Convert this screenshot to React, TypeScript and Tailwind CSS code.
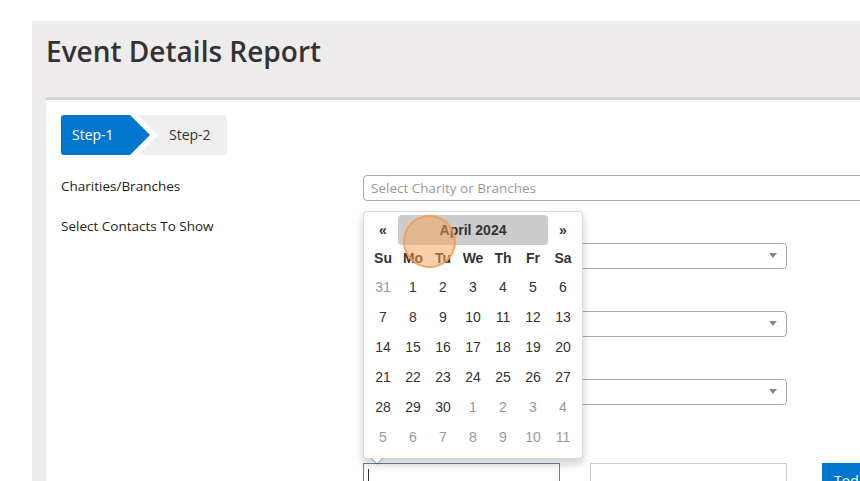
const weeks = [
  [31, 1, 2, 3, 4, 5, 6],
  [7, 8, 9, 10, 11, 12, 13],
  [14, 15, 16, 17, 18, 19, 20],
  [21, 22, 23, 24, 25, 26, 27],
  [28, 29, 30, 1, 2, 3, 4],
  [5, 6, 7, 8, 9, 10, 11],
];

const days = ["Su", "Mo", "Tu", "We", "Th", "Fr", "Sa"];

function SelectBox() {
  return (
    <div className="relative h-[26px] w-[424px] rounded-[4px] border border-[#aaaaaa] bg-white">
      <span className="absolute right-[9px] top-[9px] h-0 w-0 border-x-[4px] border-t-[5px] border-x-transparent border-t-[#888888]" />
    </div>
  );
}

function Calendar() {
  return (
    <div className="absolute left-0 top-[-252px] w-[220px] rounded-[4px] border border-black/15 bg-white px-[4px] pb-[6px] pt-[3px] shadow-[0_5px_10px_rgba(0,0,0,0.2)] font-['Liberation_Sans',Arial,sans-serif] text-[14px] text-[#333]">
      {/* header */}
      <div className="grid grid-cols-7">
        <div className="flex h-[30px] items-center justify-center font-bold">«</div>
        <div className="col-span-5 flex h-[30px] items-center justify-center rounded-[4px] bg-[#cccccc] font-bold">
          April 2024
        </div>
        <div className="flex h-[30px] items-center justify-center font-bold">»</div>
      </div>
      <div className="grid grid-cols-7">
        {days.map((d) => (
          <div key={d} className="flex h-[27px] items-center justify-center font-bold">
            {d}
          </div>
        ))}
      </div>
      {weeks.map((w, wi) => (
        <div key={wi} className="grid grid-cols-7">
          {w.map((n, i) => {
            const other = (wi === 0 && n > 7) || (wi >= 4 && n < 15);
            return (
              <div
                key={i}
                className={
                  "flex h-[30px] items-center justify-center " +
                  (other ? "text-[#999999]" : "text-[#333333]")
                }
              >
                {n}
              </div>
            );
          })}
        </div>
      ))}
      {/* pointer */}
      <span className="absolute left-[6px] top-full h-0 w-0 border-x-[7px] border-t-[7px] border-x-transparent border-t-black/15" />
      <span className="absolute left-[7px] top-full -mt-px h-0 w-0 border-x-[6px] border-t-[6px] border-x-transparent border-t-white" />
      {/* click marker */}
      <span className="absolute left-[39px] top-[3px] h-[53px] w-[53px] rounded-full border-2 border-[#f39a4f]/80 bg-[#f8a055]/50" />
    </div>
  );
}

export default function App() {
  return (
    <div className="h-[481px] w-[860px] overflow-hidden bg-white pl-[32px] pt-[21px] font-['Open_Sans',sans-serif] text-[#333]">
      <div className="h-[600px] w-[1000px] bg-[#eeeced] pl-[14px]">
        <h1 className="pt-[10px] text-[28px] font-semibold leading-[40px] text-[#333]">Event Details Report</h1>

        <div className="mt-[26px] h-[500px] border-t-[3px] border-[#d2d3da] bg-white px-[15px] pt-[15px]">
          {/* steps */}
          <div className="relative h-[40px] w-[166px] rounded-[3px] bg-[#eeeeee] text-[14px]">
            <div className="absolute inset-y-0 left-0 w-[100px] bg-white [clip-path:polygon(0_0,77px_0,97px_50%,77px_100%,0_100%)]" />
            <div className="absolute inset-y-0 left-0 w-[100px] rounded-l-[3px] bg-[#0077cc] [clip-path:polygon(0_0,69px_0,89px_50%,69px_100%,0_100%)]" />
            <span className="absolute left-[11px] top-[10px] leading-[20px] text-white">Step-1</span>
            <span className="absolute left-[108px] top-[10px] leading-[20px] text-[#333]">Step-2</span>
          </div>

          {/* charities */}
          <div className="mt-[20px] flex text-[13.5px] text-[#222]">
            <div className="w-[302px] leading-[22px]">Charities/Branches</div>
            <div className="flex h-[26px] w-[600px] items-center rounded-[4px] border border-[#aaaaaa] px-[7px] text-[#999999]">
              Select Charity or Branches
            </div>
          </div>

          {/* contacts */}
          <div className="mt-[12px] flex text-[13.5px] text-[#222]">
            <div className="w-[302px] leading-[26px]">Select Contacts To Show</div>
            <div className="flex flex-col">
              <div className="mt-[30px] flex flex-col gap-[42px]">
                <SelectBox />
                <SelectBox />
                <SelectBox />
              </div>
              <div className="mt-[58px] flex items-start">
                <div className="relative">
                  <div className="h-[34px] w-[197px] border border-[#5a86a3] pl-[4px] pt-[5px]">
                    <span className="block h-[18px] w-px bg-[#333]" />
                  </div>
                  <Calendar />
                </div>
                <div className="ml-[30px] h-[34px] w-[197px] border border-[#cccccc]" />
                <button className="ml-[35px] h-[34px] bg-[#0077cc] px-[12px] text-[14px] text-white">Today</button>
              </div>
            </div>
          </div>
        </div>
      </div>
    </div>
  );
}
